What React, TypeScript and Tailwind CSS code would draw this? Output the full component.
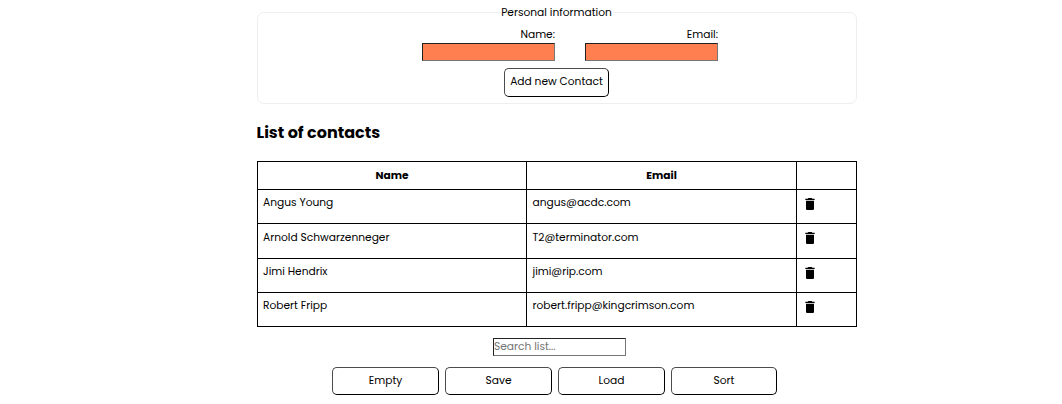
import type { ReactNode } from "react";

type Contact = { name: string; email: string; row: string; cell: string };

const contacts: Contact[] = [
  { name: "Angus Young", email: "angus@acdc.com", row: "h-[34px]", cell: "pt-1" },
  { name: "Arnold Schwarzenneger", email: "T2@terminator.com", row: "h-[35px]", cell: "pt-[5px]" },
  { name: "Jimi Hendrix", email: "jimi@rip.com", row: "h-[34px]", cell: "pt-1" },
  { name: "Robert Fripp", email: "robert.fripp@kingcrimson.com", row: "h-[34px]", cell: "pt-1" },
];

function Trash() {
  return (
    <svg className="block h-4 w-4" viewBox="0 0 24 24" fill="currentColor" aria-hidden="true">
      <path d="M6 19c0 1.100.9 2 2 2h8c1.100 0 2-.9 2-2V7H6v12zM19 4h-3.500l-1-1h-5l-1 1H5v2h14V4z" />
    </svg>
  );
}

function Button({ className, children }: { className: string; children: ReactNode }) {
  return (
    <button
      className={`flex justify-center rounded-[5px] border border-black border-t-[#4c4c4c] border-l-[#4c4c4c] bg-white pt-1 leading-[18px] whitespace-nowrap ${className}`}
    >
      {children}
    </button>
  );
}

function Field({ label, id }: { label: string; id: string }) {
  return (
    <div className="flex w-[133px] flex-col items-end">
      <label htmlFor={id} className="h-4 leading-[18px]">{label}</label>
      <input
        id={id}
        className="mt-px h-[18px] w-full border border-[#767676] border-t-[#222] border-l-[#222] bg-[#ff7f50] outline-none"
      />
    </div>
  );
}

export default function App() {
  return (
    <main className="ml-[257px] h-[404px] w-[600px] overflow-hidden bg-white pt-1 font-['Poppins','Inter',sans-serif] text-[10.667px] text-black">
      <fieldset className="h-[100px] rounded-[7px] border border-[#eee]">
        <legend className="mx-auto h-4 pr-px leading-[18px]">Personal information</legend>
        <div className="mt-[6px] ml-[164px] flex gap-[30px]">
          <Field label="Name:" id="name" />
          <Field label="Email:" id="email" />
        </div>
        <Button className="mt-[7px] ml-[246px] h-[29px] w-[105px]">Add new Contact</Button>
      </fieldset>

      <h2 className="-ml-[0.5px] mt-[17px] h-6 text-[16px] leading-6 font-bold">List of contacts</h2>

      <table className="mt-4 w-[600px] table-fixed border-separate border-spacing-0 border-t border-l border-black">
        <colgroup>
          <col className="w-[269px]" />
          <col className="w-[270px]" />
          <col className="w-[60px]" />
        </colgroup>
        <thead>
          <tr className="h-7">
            <th className="border-r border-b border-black p-0 pt-[5px] align-top leading-[18px] font-bold">Name</th>
            <th className="border-r border-b border-black p-0 pt-[5px] align-top leading-[18px] font-bold">Email</th>
            <th className="border-r border-b border-black p-0" />
          </tr>
        </thead>
        <tbody>
          {contacts.map((c) => (
            <tr key={c.email} className={c.row}>
              <td className={`border-r border-b border-black pr-0 pb-0 pl-[5px] align-top leading-[18px] ${c.cell}`}>{c.name}</td>
              <td className={`border-r border-b border-black pr-0 pb-0 pl-[5.5px] align-top leading-[18px] ${c.cell}`}>{c.email}</td>
              <td className="border-r border-b border-black p-0 pt-[6px] pl-[5px] align-top">
                <Trash />
              </td>
            </tr>
          ))}
        </tbody>
      </table>

      <input
        placeholder="Search list..."
        className="mt-[11px] ml-[236px] block h-[18px] w-[133px] border border-[#767676] border-t-[#222] border-l-[#222] bg-white px-0 outline-none placeholder:text-[#757575]"
      />
      <div className="mt-[11px] ml-[75px] flex gap-1.5">
        <Button className="h-7 w-[107px]">Empty</Button>
        <Button className="h-7 w-[107px]">Save</Button>
        <Button className="h-7 w-[107px]">Load</Button>
        <Button className="h-7 w-[106px]">Sort</Button>
      </div>
    </main>
  );
}
